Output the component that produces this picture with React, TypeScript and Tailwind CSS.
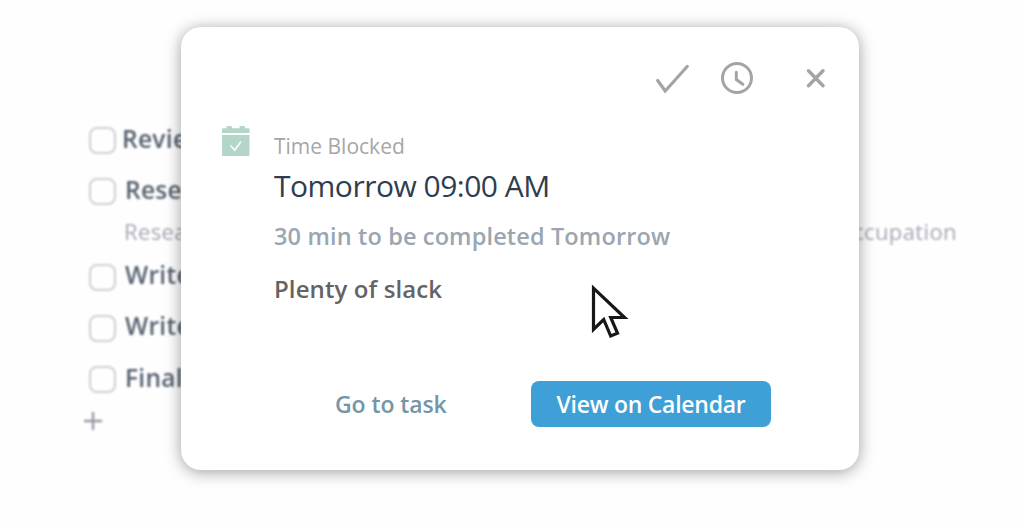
import React from 'react';

interface Task {
    title: string;
    rowClass: string;
    titleClass: string;
    note?: [string, string];
}

const tasks: Task[] = [
    { title: 'Review', rowClass: 'mt-[122px] h-9', titleClass: 'ml-1.5 pb-[3px]' },
    { title: 'Research', rowClass: 'mt-[15px] h-9', titleClass: 'ml-[9px] pb-0.5', note: ['Research', 'occupation'] },
    { title: 'Write', rowClass: 'mt-3 h-9', titleClass: 'ml-[9px] pb-1' },
    { title: 'Write', rowClass: 'mt-[15px] h-9', titleClass: 'ml-[9px] pb-1' },
    { title: 'Final', rowClass: 'mt-[15px] h-9', titleClass: 'ml-[9px] pb-[3px]' },
];

function TaskList() {
    return (
        <div className="flex flex-col pl-[89px] pr-[62px] blur-[1.2px]">
            {tasks.map((task, idx) => (
                <div key={idx}>
                    <div className={`flex items-center ${task.rowClass}`}>
                        <div className="w-[27px] h-[27px] rounded-lg border-2 border-[#cfcfd1]" />
                        <span className={`text-[24.5px] leading-8 font-semibold tracking-[0.3px] text-[#56616f] ${task.titleClass}`}>{task.title}</span>
                    </div>
                    {task.note && (
                        <div className="flex justify-between items-center h-8 pl-[35px] mt-1.5 text-[22px] tracking-[0.4px] text-[#aaa4b7]">
                            <span>{task.note[0]}</span>
                            <span>{task.note[1]}</span>
                        </div>
                    )}
                </div>
            ))}
            <svg className="w-[18px] h-[18px] -ml-[5px] mt-[15px]" viewBox="0 0 18 18" fill="none" stroke="#9c97a9" strokeWidth="2.4">
                <path d="M9 0v18M0 9h18" />
            </svg>
        </div>
    );
}

function CalendarIcon() {
    return (
        <svg className="w-7 h-[30px] shrink-0" viewBox="0 0 28 30">
            <path d="M0 3.200a1 1 0 0 1 1-1h3.500V1a1 1 0 0 1 1-1h3.500a1 1 0 0 1 1 1v1.200h7.500V1a1 1 0 0 1 1-1h3.500a1 1 0 0 1 1 1v1.200h3.500a1 1 0 0 1 1 1V7H0z" fill="#b3d6c9" />
            <path d="M0 9h27.500v20a1 1 0 0 1-1 1H1a1 1 0 0 1-1-1z" fill="#b3d6c9" />
            <path d="M8.500 19.500l4.200 4.500 6.300-8.500" fill="none" stroke="#f4fbf8" strokeWidth="1.800" />
        </svg>
    );
}

function HeaderActions() {
    return (
        <div className="flex justify-end items-center h-9 pr-[33px] text-[#a3a4a6]">
            <button className="mr-[31px]">
                <svg className="w-[34px] h-[34px]" viewBox="0 0 34 34" fill="none" stroke="currentColor" strokeWidth="3.200" strokeLinecap="round">
                    <path d="M1.700 19.500l7.500 10.500L31.200 5.500" />
                </svg>
            </button>
            <button className="mr-[51px]">
                <svg className="w-[34px] h-[34px]" viewBox="0 0 34 34" fill="none" stroke="currentColor" strokeWidth="3" strokeLinecap="round">
                    <circle cx="16" cy="17" r="14.500" />
                    <path d="M15.300 11.300v7.200l6.500 4.800" strokeLinejoin="round" />
                </svg>
            </button>
            <button>
                <svg className="w-[20px] h-[20px]" viewBox="0 0 20 20" fill="none" stroke="currentColor" strokeWidth="3.400" strokeLinecap="round">
                    <path d="M2.500 2.700l14.500 15M17 2.700l-14.500 15" />
                </svg>
            </button>
        </div>
    );
}

function TimeBlockCard() {
    return (
        <div className="absolute left-[181px] top-[27px] w-[678px] h-[443px] flex flex-col rounded-[20px] bg-white pt-[33px] shadow-[0_2px_16px_rgba(0,0,0,0.38)] whitespace-nowrap">
            <HeaderActions />
            <div className="flex pl-[41px] pt-[30px]">
                <CalendarIcon />
                <div className="ml-6 pt-[6px] flex flex-col">
                    <p className="text-[21px] leading-7 text-[#a6a6a6]">Time Blocked</p>
                    <p className="mt-[6px] text-[30px] leading-10 tracking-[-0.5px] text-[#2f3d50]">Tomorrow 09:00 AM</p>
                    <p className="mt-[14px] text-[23.5px] leading-8 font-semibold tracking-[0.14px] text-[#9aa6b1]">30 min to be completed Tomorrow</p>
                    <p className="mt-[21px] text-[24px] leading-8 font-semibold tracking-[0.1px] text-[#646464]">Plenty of slack</p>
                </div>
            </div>
            <div className="flex items-center mt-[76px] pl-[154px] text-[23px] leading-8 font-semibold">
                <button className="w-[112px] text-left tracking-[-0.1px] text-[#7496a8]">Go to task</button>
                <button className="ml-[84px] w-[240px] h-[46px] rounded-lg bg-[#3f9fd7] tracking-[-0.26px] text-white">View on Calendar</button>
            </div>
        </div>
    );
}

function Cursor() {
    return (
        <svg className="absolute left-[590px] top-[282px] w-10 h-[58px]" viewBox="0 0 40 58">
            <path d="M3.500 6.200v41.300l10.200-10 7 16.500 6.800-2.800-6.800-15.700h13.800z" fill="#fff" stroke="#17171a" strokeWidth="3.200" />
        </svg>
    );
}

export default function App() {
    return (
        <div className="relative w-full h-[527px] overflow-hidden bg-[#fefefe] font-['Open_Sans','Noto_Sans',sans-serif]">
            <TaskList />
            <TimeBlockCard />
            <Cursor />
        </div>
    );
}
